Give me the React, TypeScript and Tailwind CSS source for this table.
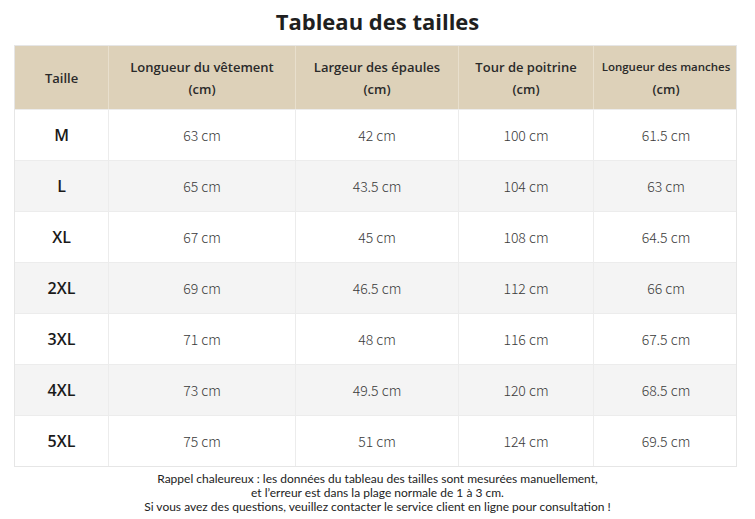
const headers = [
  ['Taille'],
  ['Longueur du vêtement', '(cm)'],
  ['Largeur des épaules', '(cm)'],
  ['Tour de poitrine', '(cm)'],
  ['Longueur des manches', '(cm)'],
];

const rows = [
  ['M', '63 cm', '42 cm', '100 cm', '61.5 cm'],
  ['L', '65 cm', '43.5 cm', '104 cm', '63 cm'],
  ['XL', '67 cm', '45 cm', '108 cm', '64.5 cm'],
  ['2XL', '69 cm', '46.5 cm', '112 cm', '66 cm'],
  ['3XL', '71 cm', '48 cm', '116 cm', '67.5 cm'],
  ['4XL', '73 cm', '49.5 cm', '120 cm', '68.5 cm'],
  ['5XL', '75 cm', '51 cm', '124 cm', '69.5 cm'],
];

export default function App() {
  return (
    <div className="w-[755px] h-[519px] bg-white overflow-hidden font-['Open_Sans',sans-serif]">
      <h1 className="h-[45px] pt-[6px] text-center text-[22px] font-bold leading-[30px] text-[#1f1f1f]">
        Tableau des tailles
      </h1>

      <div className="ml-[14px] w-[723px] border border-[#e6e6e6]">
        <div className="grid grid-cols-[93px_187px_163px_135px_145px] h-[63px] bg-[#ddd1b9]">
          {headers.map((h, i) => (
            <div
              key={i}
              className={`flex flex-col items-center justify-center whitespace-nowrap text-[13px] font-semibold leading-[22px] text-[#2a2a2a] ${i > 0 ? 'border-l border-[#e8dfcd]' : ''}`}
            >
              {h.map((line, li) => (
                <span key={line} className={i === 4 && li === 0 ? 'text-[11.5px]' : ''}>
                  {line}
                </span>
              ))}
            </div>
          ))}
        </div>

        {rows.map((r, ri) => (
          <div
            key={r[0]}
            className={`grid grid-cols-[93px_187px_163px_135px_145px] h-[51px] border-t border-[#ececec] ${ri % 2 === 1 ? 'bg-[#f4f4f4]' : 'bg-white'}`}
          >
            {r.map((cell, ci) => (
              <div
                key={ci}
                className={`flex items-center justify-center ${ci > 0 ? 'border-l border-[#ececec]' : ''} ${ci === 0 ? 'text-[16px] font-semibold text-[#1a1a1a]' : "font-['Noto_Sans_CJK_SC',sans-serif] text-[14px] font-light text-[#3a3a3a]"}`}
              >
                {cell}
              </div>
            ))}
          </div>
        ))}
      </div>

      <div className="mt-[5px] text-center font-['Lato',sans-serif] text-[12px] leading-[14px] text-[#222]">
        <p>Rappel chaleureux : les données du tableau des tailles sont mesurées manuellement,</p>
        <p>et l’erreur est dans la plage normale de 1 à 3 cm.</p>
        <p>Si vous avez des questions, veuillez contacter le service client en ligne pour consultation !</p>
      </div>
    </div>
  );
}
